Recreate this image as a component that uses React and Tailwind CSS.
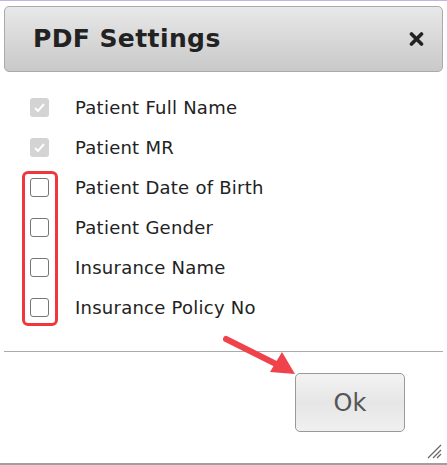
import React from 'react';

const fields = [
  { label: 'Patient Full Name', locked: true },
  { label: 'Patient MR', locked: true },
  { label: 'Patient Date of Birth' },
  { label: 'Patient Gender' },
  { label: 'Insurance Name' },
  { label: 'Insurance Policy No' },
];

function Box({ locked }) {
  if (locked) {
    return (
      <span className="w-[19px] h-[19px] rounded-[3px] bg-[#d4d4d4] flex items-center justify-center">
        <svg width="13" height="13" viewBox="0 0 13 13">
          <path d="M2 7 L5 10 L11 3" fill="none" stroke="#fff" strokeWidth="2" />
        </svg>
      </span>
    );
  }
  return <span className="w-[19px] h-[19px] rounded-[3px] border border-[#767676] bg-white" />;
}

export default function App() {
  return (
    <div
      className="relative w-[447px] h-[465px] bg-white flex flex-col border-t border-t-[#c4b4de] border-b-2 border-b-[#a0a0a0]"
      style={{ fontFamily: '"DejaVu Sans", Verdana, sans-serif' }}
    >
      {/* title bar */}
      <div className="mx-[4px] mt-[5px] h-[66px] rounded-[5px] border border-[#aaaaaa] bg-gradient-to-b from-[#e8e8e8] to-[#c9c9c9] flex items-center justify-between pl-[28px] pr-[18px]">
        <span className="text-[25px] font-bold text-[#222] tracking-[0.4px]">PDF Settings</span>
        <svg width="15" height="14" viewBox="0 0 15 14">
          <path d="M2.5 2 L12.5 12 M12.5 2 L2.5 12" stroke="#222" strokeWidth="3.6" strokeLinecap="round" />
        </svg>
      </div>

      {/* options */}
      <div className="mt-[15px] flex flex-col">
        {fields.map((f) => (
          <div key={f.label} className="h-10 flex items-center pl-[30px]">
            <Box locked={f.locked} />
            <span className="ml-[26px] text-[18px] text-[#222] tracking-[0.25px]">{f.label}</span>
          </div>
        ))}
      </div>

      <div className="mx-[4px] mt-[24px] h-px bg-[#ababab]" />

      <div className="flex justify-end pr-[42px] mt-[21px]">
        <button className="w-[110px] h-[59px] rounded-[5px] border border-[#999] bg-gradient-to-b from-[#f3f3f3] via-[#e6e6e6] to-[#f0f0f0] text-[24px] text-[#555]">
          Ok
        </button>
      </div>

      {/* red highlight */}
      <div className="absolute left-[22px] top-[170px] w-[36px] h-[155px] border-[3px] border-[#f0383c] rounded-[6px]" />

      {/* arrow */}
      <svg className="absolute left-0 top-0" width="447" height="465" viewBox="0 0 447 465">
        <line x1="226" y1="338" x2="280" y2="365" stroke="#f0424a" strokeWidth="6" strokeLinecap="round" />
        <polygon points="295,373 282,351 270,371" fill="#f0424a" />
      </svg>

      {/* resize grip */}
      <svg className="absolute right-[5px] bottom-[4px]" width="16" height="16" viewBox="0 0 16 16">
        <path d="M15 2 L2 15 M15 7 L7 15 M15 11 L11 15" stroke="#666" strokeWidth="1.2" />
      </svg>
    </div>
  );
}
